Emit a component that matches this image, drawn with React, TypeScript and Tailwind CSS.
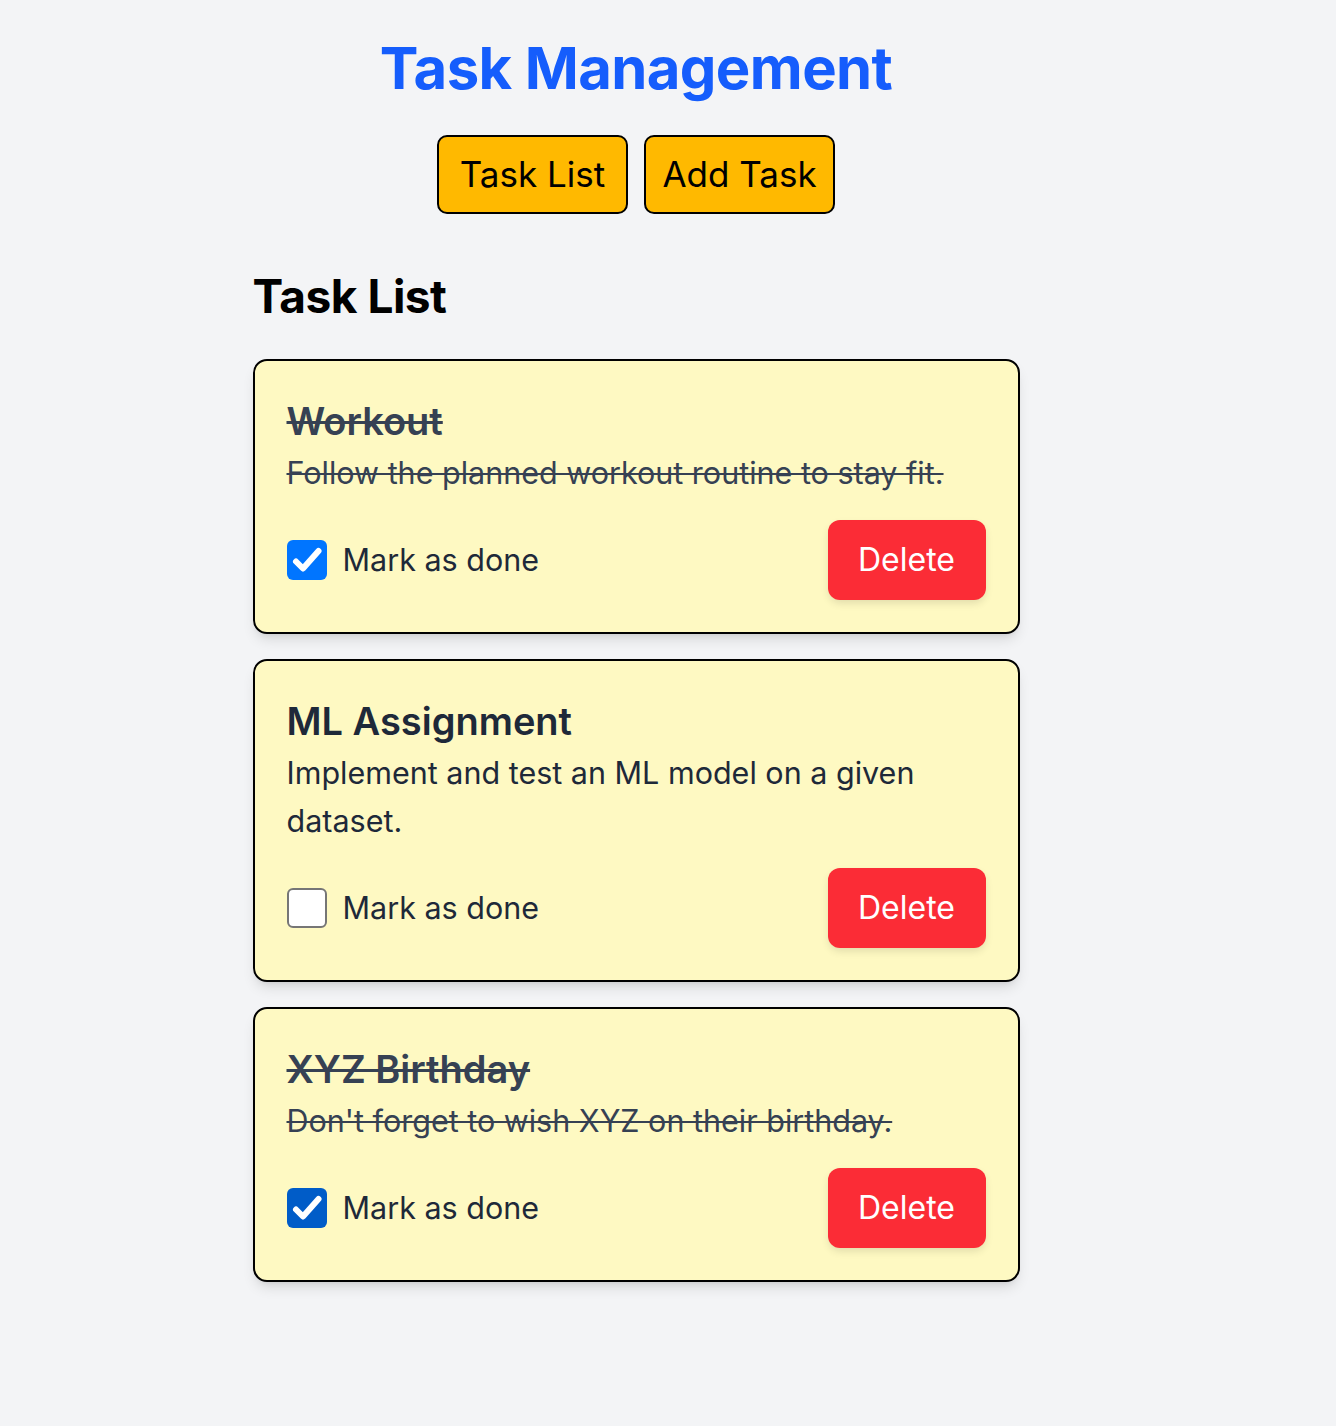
import { useState } from "react";

type Task = {
  id: number;
  title: string;
  description: string;
  done: boolean;
};

const initialTasks: Task[] = [
  { id: 1, title: "Workout", description: "Follow the planned workout routine to stay fit.", done: true },
  { id: 2, title: "ML Assignment", description: "Implement and test an ML model on a given dataset.", done: false },
  { id: 3, title: "XYZ Birthday", description: "Don't forget to wish XYZ on their birthday.", done: true },
];

function Checkbox({ checked, dark, onChange }: { checked: boolean; dark?: boolean; onChange: () => void }) {
  if (!checked) {
    return (
      <button
        onClick={onChange}
        className="w-[40px] h-[40px] shrink-0 rounded-[6px] border-2 border-[#767676] bg-white"
      />
    );
  }
  return (
    <button
      onClick={onChange}
      className={`w-[40px] h-[40px] shrink-0 rounded-[6px] flex items-center justify-center ${dark ? "bg-[#005cc8]" : "bg-[#0075ff]"}`}
    >
      <svg width="40" height="40" viewBox="0 0 40 40" fill="none">
        <path d="M9 21.5l7 7L31.5 11" stroke="white" strokeWidth="6" strokeLinecap="round" strokeLinejoin="round" />
      </svg>
    </button>
  );
}

export default function App() {
  const [tasks, setTasks] = useState<Task[]>(initialTasks);

  const toggle = (id: number) =>
    setTasks((prev) => prev.map((t) => (t.id === id ? { ...t, done: !t.done } : t)));
  const remove = (id: number) => setTasks((prev) => prev.filter((t) => t.id !== id));

  return (
    <div className="min-h-[1426px] bg-[#f3f4f6] font-['Inter',sans-serif] pr-[64px]">
      <div className="flex flex-col items-center pt-[32px]">
        <h1 className="text-[58px] leading-[72px] font-bold text-[#155dfc] tracking-[-0.6px]">Task Management</h1>

        {/* Nav */}
        <div className="flex gap-[16px] mt-[31px]">
          <button className="w-[191px] h-[79px] bg-[#ffb900] border-2 border-black rounded-[10px] text-[35px] text-black">
            Task List
          </button>
          <button className="w-[191px] h-[79px] bg-[#ffb900] border-2 border-black rounded-[10px] text-[35px] text-black">
            Add Task
          </button>
        </div>

        <div className="w-[767px] mt-[50px]">
          <h2 className="text-[46px] leading-[64px] font-bold text-black tracking-[-0.5px]">Task List</h2>

          <div className="mt-[31px] flex flex-col gap-[25px]">
            {tasks.map((task, i) => (
              <div
                key={task.id}
                className={`bg-[#fef9c2] border-2 border-black rounded-[14px] p-[32px] shadow-[0_8px_14px_-3px_rgba(0,0,0,0.12),0_4px_6px_-4px_rgba(0,0,0,0.1)] ${task.done ? "text-[#364153]" : "text-[#1e2939]"}`}
              >
                <h3 className={`text-[38px] leading-[56px] font-semibold ${task.done ? "line-through decoration-[3px]" : ""}`}>
                  {task.title}
                </h3>
                <p className={`text-[30.5px] leading-[48px] ${task.done ? "line-through decoration-2" : ""}`}>
                  {task.description}
                </p>
                <div className="mt-[23px] flex items-center justify-between">
                  <label className="flex items-center gap-[16px] text-[30.5px] text-[#1e2939]">
                    <Checkbox checked={task.done} dark={i === 2} onChange={() => toggle(task.id)} />
                    Mark as done
                  </label>
                  <button
                    onClick={() => remove(task.id)}
                    className="w-[158px] h-[80px] bg-[#fb2c36] text-white text-[32px] rounded-[12px] shadow-[0_4px_8px_-1px_rgba(0,0,0,0.12)]"
                  >
                    Delete
                  </button>
                </div>
              </div>
            ))}
          </div>
        </div>
      </div>
    </div>
  );
}
